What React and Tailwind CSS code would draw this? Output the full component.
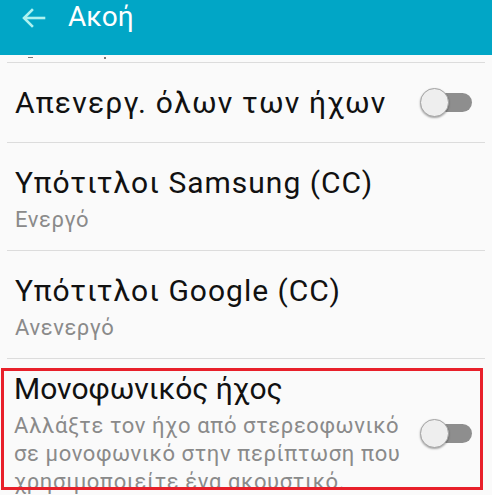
import { useState } from 'react'

const ROWS = [
  { id: 'samsung', title: 'Υπότιτλοι Samsung (CC)', sub: 'Ενεργό', track: 'tracking-[1px]' },
  { id: 'google', title: 'Υπότιτλοι Google (CC)', sub: 'Ανενεργό', track: 'tracking-[1px]' },
]

function Toggle({ onClick }) {
  return (
    <button onClick={onClick} className="relative w-[52px] h-[29px] flex-shrink-0">
      <span className="absolute right-0 top-[5px] h-[19px] w-[44px] rounded-full bg-[#8e8e8e]" />
      <span className="absolute left-0 top-0 h-[29px] w-[29px] rounded-full bg-[#eeeeee] border border-[#a3a3a3] shadow-[0_1px_2px_rgba(0,0,0,0.35)]" />
    </button>
  )
}

export default function App() {
  const [mute, setMute] = useState(false)
  const [mono, setMono] = useState(false)

  return (
    <div className="w-[492px] h-[495px] overflow-hidden bg-[#fafafa]" style={{ fontFamily: "Roboto, 'Liberation Sans', sans-serif" }}>
      {/* Header */}
      <div className="h-[55px] bg-[#01a6c6] flex items-start">
        <svg width="24" height="20" viewBox="0 0 24 20" className="ml-[22px] mt-[8px]" fill="none" stroke="#aef2f0" strokeWidth="2.6" strokeLinecap="square">
          <path d="M10 2 L2 10 L10 18" />
          <path d="M3 10 H22" />
        </svg>
        <span className="ml-[22px] text-[28px] leading-[34px] text-white">Ακοή</span>
      </div>

      {/* scrolled remnant */}
      <div className="h-[7px] flex items-start">
        <span className="ml-[28px] mt-[2px] h-[1px] w-[5px] bg-[#777]" />
        <span className="ml-[71px] mt-[2px] h-[2px] w-[2px] bg-[#777]" />
      </div>

      <div className="mx-[7px] h-[1px] bg-[#dcdcdc]" />

      {/* Rows */}
      <div className="h-[79px] flex items-center pl-[15px] pr-[20px]">
        <span className="flex-1 text-[30px] leading-[36px] tracking-[1.2px] text-[#111]">Απενεργ. όλων των ήχων</span>
        <Toggle onClick={() => setMute(!mute)} />
      </div>
      <div className="mx-[7px] h-[1px] bg-[#dcdcdc]" />

      {ROWS.map(r => (
        <div key={r.id}>
          <div className="h-[107px] pl-[15px] pt-[22px]">
            <p className={`text-[30px] leading-[36px] text-[#111] ${r.track}`}>{r.title}</p>
            <p className="mt-[6px] text-[22px] leading-[26px] tracking-[0.6px] text-[#8a8a8a]">{r.sub}</p>
          </div>
          <div className="mx-[7px] h-[1px] bg-[#dcdcdc]" />
        </div>
      ))}

      <div className="relative flex items-center pl-[14px] pr-[20px] pt-[12px] pb-[14px]">
        <div className="flex-1 min-w-0">
          <p className="text-[30px] leading-[36px] text-[#111]">Μονοφωνικός ήχος</p>
          <p className="mt-[5px] w-[396px] text-[22px] leading-[28px] tracking-[0.6px] text-[#8a8a8a]">
            Αλλάξτε τον ήχο από στερεοφωνικό σε μονοφωνικό στην περίπτωση που χρησιμοποιείτε ένα ακουστικό.
          </p>
        </div>
        <Toggle onClick={() => setMono(!mono)} />
        <div className="absolute left-[1px] top-[9px] w-[482px] h-[122px] border-[3px] border-[#e8202a] pointer-events-none" />
      </div>
    </div>
  )
}
